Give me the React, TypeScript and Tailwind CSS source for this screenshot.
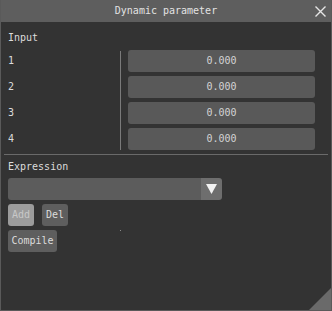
import React from 'react'

// Dynamic parameter dialog
const inputs = ['1', '2', '3', '4']

export default function App() {
  return (
    <div
      className="relative w-[332px] h-[311px] bg-[#333333] border-x border-b border-[#5a5a5a] text-[10px] text-[#dcdcdc] overflow-hidden"
      style={{ fontFamily: '"DejaVu Sans Mono", monospace' }}
    >
      {/* title bar */}
      <div className="relative -mx-px h-[22px] bg-[#5e5e5e] flex items-center justify-center leading-none text-[#e2e2e2]">
        <span>Dynamic parameter</span>
        <svg className="absolute right-[6px] top-[6px]" width="11" height="11" viewBox="0 0 11 11">
          <path d="M0.5 0.5 L10.5 10.5 M10.5 0.5 L0.5 10.5" stroke="#e6e6e6" strokeWidth="1.4" />
        </svg>
      </div>

      <div className="px-[7px]">
        <div className="mt-2 h-4 leading-4">Input</div>

        <div className="mt-1 flex pb-1">
          <div className="w-[112px] flex flex-col gap-1">
            {inputs.map(n => (
              <div key={n} className="h-[22px] flex items-center leading-none">{n}</div>
            ))}
          </div>
          <div className="w-px mt-px bg-[#7a7a7a]" />
          <div className="ml-[7px] w-[187px] flex flex-col gap-1">
            {inputs.map(n => (
              <div key={n} className="h-[22px] rounded-[3px] bg-[#595959] flex items-center justify-center leading-none text-[#d4d4d4]">
                0.000
              </div>
            ))}
          </div>
        </div>

        <div className="-mx-[4px] h-px bg-[#6a6a6a]" />

        <div className="mt-1 h-4 leading-4">Expression</div>

        <div className="mt-[3px] w-[214px] h-[22px] flex rounded-[3px] overflow-hidden">
          <div className="flex-1 bg-[#5c5c5c]" />
          <div className="w-[21px] bg-[#6e6e6e] flex items-center justify-center">
            <svg width="11" height="10" viewBox="0 0 11 10">
              <path d="M0 0 H11 L5.5 10 Z" fill="#f2f2f2" />
            </svg>
          </div>
        </div>

        <div className="mt-1 flex gap-2">
          <div className="w-[26px] h-[22px] rounded-[3px] bg-[#9c9c9c] flex items-center justify-center leading-none text-[#c8c8c8]">
            Add
          </div>
          <div className="w-[26px] h-[22px] rounded-[3px] bg-[#5e5e5e] flex items-center justify-center leading-none">
            Del
          </div>
        </div>

        <div className="mt-1 w-[49px] h-[22px] rounded-[3px] bg-[#5e5e5e] flex items-center justify-center leading-none">
          Compile
        </div>
      </div>

      {/* stray pixel */}
      <div className="absolute left-[119px] top-[230px] w-px h-px bg-[#8a8a8a]" />

      {/* resize grip */}
      <svg className="absolute right-0 bottom-0" width="22" height="22" viewBox="0 0 22 22">
        <path d="M22 0 V22 H0 Z" fill="#6a6a6a" />
      </svg>
    </div>
  )
}
